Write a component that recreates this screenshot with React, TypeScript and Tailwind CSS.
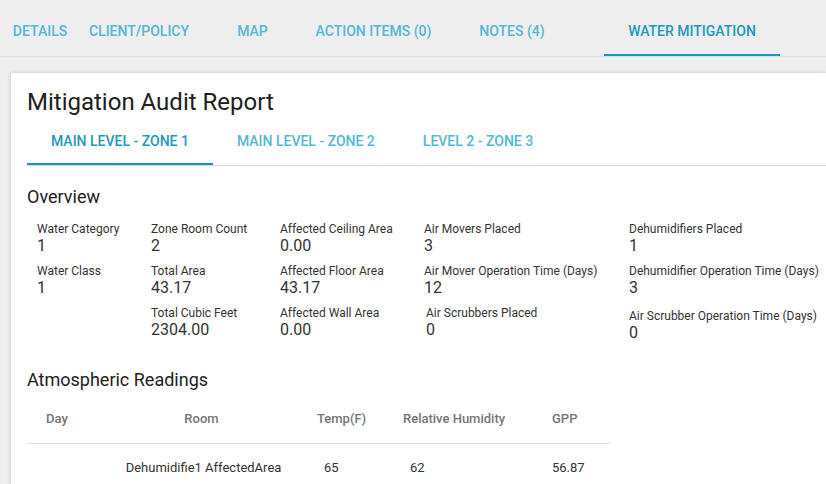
import React from 'react'

// Mitigation audit report — tab bar + zone tabs + overview grid + readings table

const topTabs = [
  { label: 'DETAILS', w: 'w-[80px]' },
  { label: 'CLIENT/POLICY', w: 'w-[118px]' },
  { label: 'MAP', w: 'w-[109px]' },
  { label: 'ACTION ITEMS (0)', w: 'w-[133px]' },
  { label: 'NOTES (4)', w: 'w-[144px]' },
]

const zoneTabs = ['MAIN LEVEL - ZONE 1', 'MAIN LEVEL - ZONE 2', 'LEVEL 2 - ZONE 3']

function Stat({ label, value, className = '' }: { label: string; value: string; className?: string }) {
  return (
    <div className={'flex flex-col ' + className}>
      <span className="text-[12px] leading-[14px] text-[#333333] whitespace-nowrap">{label}</span>
      <span className="text-[16px] leading-[20px] text-[#333333]">{value}</span>
    </div>
  )
}

export default function App() {
  return (
    <div className="w-[826px] h-[484px] overflow-hidden bg-[#eeeeee] font-['Roboto',sans-serif]">
      {/* top tabs */}
      <div className="flex h-[57px] border-b border-[#dcdcdc]">
        {topTabs.map((t) => (
          <button key={t.label} className={t.w + ' h-[56px] flex items-center justify-center pt-[6px] text-[14px] font-medium text-[#53b8d6]'}>
            {t.label}
          </button>
        ))}
        <button className="ml-[20px] w-[176px] h-[56px] flex items-center justify-center pt-[8px] text-[14px] font-medium text-[#1b9ac0] border-b-2 border-[#0e9bbf]">
          WATER MITIGATION
        </button>
      </div>

      {/* card */}
      <div className="ml-[11px] mt-[16px] bg-white shadow-[0_0_4px_rgba(0,0,0,0.18)] rounded-tl-[2px] h-[500px] pl-[16px]">
        <h1 className="pt-[14px] text-[24px] leading-[30px] text-[#212121]">Mitigation Audit Report</h1>

        <div className="flex border-b border-[#d6d6d6]">
          {zoneTabs.map((z, i) => (
            <button
              key={z}
              className={
                'px-6 h-[48px] flex items-center text-[14px] font-medium ' +
                (i === 0 ? 'text-[#1b9ac0] border-b-2 border-[#0e9bbf] pt-[2px]' : 'text-[#53b8d6]')
              }
            >
              {z}
            </button>
          ))}
        </div>

        <h2 className="mt-[19px] text-[18px] leading-[24px] text-[#212121]">Overview</h2>

        <div className="flex mt-[13px] pl-[10px]">
          <div className="w-[114px] flex flex-col gap-[8px]">
            <Stat label="Water Category" value="1" />
            <Stat label="Water Class" value="1" />
          </div>
          <div className="w-[129px] flex flex-col gap-[8px]">
            <Stat label="Zone Room Count" value="2" />
            <Stat label="Total Area" value="43.17" />
            <Stat label="Total Cubic Feet" value="2304.00" />
          </div>
          <div className="w-[144px] flex flex-col gap-[8px]">
            <Stat label="Affected Ceiling Area" value="0.00" />
            <Stat label="Affected Floor Area" value="43.17" />
            <Stat label="Affected Wall Area" value="0.00" />
          </div>
          <div className="w-[205px] flex flex-col gap-[8px]">
            <Stat label="Air Movers Placed" value="3" />
            <Stat label="Air Mover Operation Time (Days)" value="12" />
            <Stat label="Air Scrubbers Placed" value="0" className="ml-[2px]" />
          </div>
          <div className="flex flex-col gap-[8px]">
            <Stat label="Dehumidifiers Placed" value="1" />
            <Stat label="Dehumidifier Operation Time (Days)" value="3" />
            <Stat label="Air Scrubber Operation Time (Days)" value="0" className="mt-[3px]" />
          </div>
        </div>

        <h2 className="mt-[25px] text-[18px] leading-[24px] text-[#212121]">Atmospheric Readings</h2>

        <div className="w-[584px] mt-[2px]">
          <div className="grid grid-cols-[59px_231px_86px_149px_59px] h-[50px] items-center border-b border-[#e0e0e0] text-[13px] font-medium text-[#757575]">
            <span className="text-center pl-[1px]">Day</span>
            <span className="text-center">Room</span>
            <span>Temp(F)</span>
            <span>Relative Humidity</span>
            <span>GPP</span>
          </div>
          <div className="grid grid-cols-[59px_231px_86px_149px_59px] h-[48px] items-center text-[13px] text-[#333333]">
            <span />
            <span className="text-center pl-[4px] whitespace-nowrap">Dehumidifie1 AffectedArea</span>
            <span className="pl-[7px]">65</span>
            <span className="pl-[7px]">62</span>
            <span>56.87</span>
          </div>
        </div>
      </div>
    </div>
  )
}
